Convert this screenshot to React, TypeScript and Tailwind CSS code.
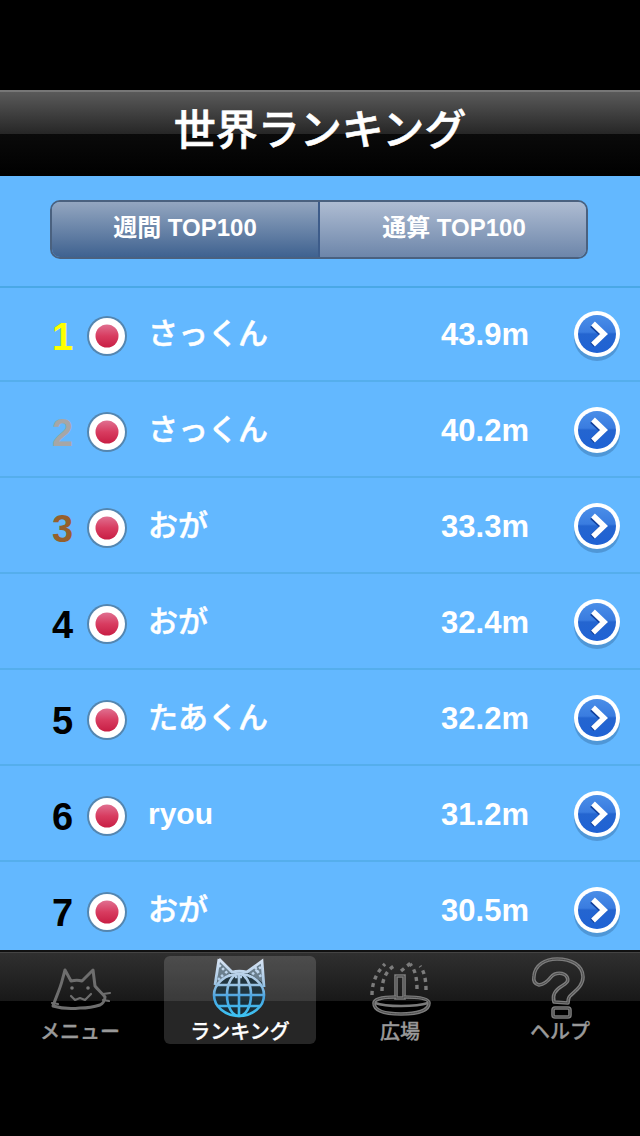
const jp = { fontFamily: '"Liberation Sans", "Noto Sans CJK JP", sans-serif' }

const rows = [
  { rank: "1", color: "text-[#ffff00]", name: "さっくん", dist: "43.9m", weight: "font-medium [-webkit-text-stroke:0.5px_white]" },
  { rank: "2", color: "text-[#a6a6a6]", name: "さっくん", dist: "40.2m", weight: "font-medium [-webkit-text-stroke:0.5px_white]" },
  { rank: "3", color: "text-[#96602c]", name: "おが", dist: "33.3m", weight: "font-medium [-webkit-text-stroke:0.5px_white]" },
  { rank: "4", color: "text-black", name: "おが", dist: "32.4m", weight: "font-medium [-webkit-text-stroke:0.5px_white]" },
  { rank: "5", color: "text-black", name: "たあくん", dist: "32.2m", weight: "font-medium [-webkit-text-stroke:0.5px_white]" },
  { rank: "6", color: "text-black", name: "ryou", dist: "31.2m", weight: "font-bold" },
  { rank: "7", color: "text-black", name: "おが", dist: "30.5m", weight: "font-medium [-webkit-text-stroke:0.5px_white]" },
]

function Flag() {
  return (
    <svg width="42" height="42" viewBox="0 0 42 42" className="shrink-0">
      <defs>
        <linearGradient id="red" x1="0" y1="0" x2="0" y2="1">
          <stop offset="0" stopColor="#e07090" />
          <stop offset="0.5" stopColor="#d83c60" />
          <stop offset="1" stopColor="#c81e44" />
        </linearGradient>
      </defs>
      <circle cx="21" cy="21" r="20" fill="#4f7596" opacity="0.75" />
      <circle cx="21" cy="21" r="18" fill="#fff" />
      <circle cx="21" cy="21" r="11.5" fill="url(#red)" />
    </svg>
  )
}

function Disclosure() {
  return (
    <svg width="50" height="54" viewBox="0 0 50 54" className="shrink-0">
      <defs>
        <linearGradient id="blue" x1="0" y1="0" x2="0" y2="1">
          <stop offset="0" stopColor="#4a8ee8" />
          <stop offset="0.45" stopColor="#3a7ce0" />
          <stop offset="0.5" stopColor="#2465d0" />
          <stop offset="1" stopColor="#1f62d4" />
        </linearGradient>
      </defs>
      <ellipse cx="25" cy="29" rx="23" ry="23" fill="#2a5a8c" opacity="0.35" />
      <circle cx="25" cy="25" r="23" fill="#fff" />
      <circle cx="25" cy="25" r="19" fill="url(#blue)" />
      <path d="M20 16 L31 26 L20 36" fill="none" stroke="#12409c" strokeWidth="5.5" />
      <path d="M21 14.5 L32 25 L21 35.5" fill="none" stroke="#fff" strokeWidth="5.5" />
    </svg>
  )
}

function Outline({ d }: { d: string }) {
  return (
    <>
      <path d={d} stroke="#7c7c7c" strokeWidth="3.6" />
      <path d={d} stroke="#4a4a4a" strokeWidth="1" />
    </>
  )
}

function CatIcon() {
  return (
    <svg width="70" height="70" viewBox="0 0 70 70" fill="none" strokeLinecap="round" strokeLinejoin="round">
      <g stroke="#6e6e6e" strokeWidth="3">
        <path d="M8 53 C11 44 15 36 17 28 L20 17 L26 28 C30 27 34 27 37 28 L48 17 L50 33 C53 37 57 40 60 44 C60 48 57 51 55 52 C46 55 38 55 35 55 C26 56 18 56 8 53 Z" />
        <path d="M58 41 L65 40 M58 47 L64 48 M7 50 L13 51" strokeWidth="2.2" />
        <path d="M26 43 L30 47 L35 45 L40 47 L46 41" strokeWidth="2.2" />
      </g>
      <circle cx="27" cy="35" r="1.8" fill="#777" />
      <circle cx="43" cy="35" r="1.8" fill="#777" />
    </svg>
  )
}

function GlobeCatIcon() {
  return (
    <svg width="70" height="70" viewBox="0 0 70 70" fill="none">
      <defs>
        <linearGradient id="globe" gradientUnits="userSpaceOnUse" x1="0" y1="6" x2="0" y2="64">
          <stop offset="0" stopColor="#d8e4f4" />
          <stop offset="0.4" stopColor="#a8c8e4" />
          <stop offset="0.65" stopColor="#4aa4e0" />
          <stop offset="1" stopColor="#3cc4f4" />
        </linearGradient>
      </defs>
      <path d="M14 6 L27 19 C32 18 37 18 42 19 L57 8 L59 40 C59 54 48 63 34 63 C20 63 9 54 9 40 Z" fill="#14303f" fillOpacity="0.7" />
      <path d="M14 6 L27 19 L12 30 Z M57 8 L42 19 L58 30 Z" fill="#c4d6ea" fillOpacity="0.45" />
      <g stroke="url(#globe)" strokeWidth="2.6">
        <path d="M14 6 L27 19 C32 18 37 18 42 19 L57 8 L59 34 M14 6 L10 32" strokeWidth="2.8" />
        <ellipse cx="34" cy="42" rx="25" ry="21" />
        <ellipse cx="34" cy="42" rx="12" ry="21" />
        <path d="M34 21 V63 M9 42 H59 M12 32 H56 M13 53 H55" />
        <path d="M14 12 L26 24 M18 22 L12 28 M56 14 L44 24 M50 14 L56 24 M30 24 L40 24" strokeDasharray="2.5 2" />
      </g>
    </svg>
  )
}

function FountainIcon() {
  return (
    <svg width="80" height="70" viewBox="0 0 80 70" fill="none">
      <Outline d="M36 23 H44 V45 H36 Z" />
      <Outline d="M36 44 C26 44 14 45 14 50 C14 58 26 61 41 61 C56 61 69 58 69 50 C69 45 56 44 44 44" />
      <path d="M15 50 C26 54 56 54 68 50" stroke="#7c7c7c" strokeWidth="2.4" />
      <g stroke="#7c7c7c" strokeWidth="3.4" strokeDasharray="4 4">
        <path d="M12 42 C12 30 16 20 25 11" />
        <path d="M22 38 C22 27 26 18 34 13" />
        <path d="M57 36 C57 25 55 16 50 11" />
        <path d="M66 37 C66 26 64 18 60 13" />
        <path d="M41 18 L52 9" />
      </g>
    </svg>
  )
}

function HelpIcon() {
  return (
    <svg width="70" height="70" viewBox="0 0 70 70" fill="none" strokeLinejoin="round">
      <Outline d="M9 23 C10 12 20 6 32 6 C46 6 58 12 58 24 C58 33 50 38 45 43 C43 45 43 47 43 50 L29 49 C27 42 30 37 37 33 C42 30 44 28 42 24 C39 19 30 19 26 24 C23 28 20 31 14 32 C10 31 8 28 9 23 Z" />
      <Outline d="M30 55 H43 Q45 55 45 57 V62 Q45 64 43 64 H30 Q28 64 28 62 V57 Q28 55 30 55 Z" />
    </svg>
  )
}

function Tab({ icon, label, active }: { icon: React.ReactNode; label: string; active?: boolean }) {
  return (
    <div className="w-[160px] flex justify-center">
      <div className={`w-[152px] h-[88px] pt-[2px] rounded-md flex flex-col items-center ${active ? "bg-white/15 text-white" : "text-[#999]"}`}>
        <div className="h-[60px] flex items-center justify-center">{icon}</div>
        <div className="mt-[2px] text-[20px] leading-[24px] font-medium [-webkit-text-stroke:0.3px_currentColor]">{label}</div>
      </div>
    </div>
  )
}

export default function App() {
  return (
    <div className="w-[640px] h-[1136px] bg-black flex flex-col overflow-hidden" style={jp}>
      <div className="h-[90px] shrink-0" />
      <header className="h-[86px] shrink-0 flex items-center justify-center border-t-2 border-[#777] bg-[linear-gradient(#5a5a5a_0%,#262626_50%,#0a0a0a_50%,#000_100%)]">
        <h1 className="text-[42px] leading-none font-medium text-white pb-[6px] [-webkit-text-stroke:0.6px_white]">世界ランキング</h1>
      </header>

      <main className="h-[774px] shrink-0 bg-[#63b8ff] overflow-hidden">
        <div className="pt-6 pl-[50px]">
          <div className="w-[538px] h-[59px] flex rounded-[10px] border-2 border-[#4a617f] overflow-hidden text-white text-[24px] font-bold">
            <div className="w-[268px] pb-[4px] flex items-center justify-center border-r-2 border-[#3d5c8a] bg-[linear-gradient(#93a6c0,#3f6290)]">週間 TOP100</div>
            <div className="flex-1 pb-[4px] pl-[2px] flex items-center justify-center bg-[linear-gradient(#aebcd2,#6d86aa)]">通算 TOP100</div>
          </div>
        </div>
        <div className="mt-[27px]">
          {rows.map((r) => (
            <div key={r.rank} className="h-[96px] flex items-center border-b-2 border-[#55aeec] pl-[50px] pr-[18px] first:shadow-[inset_0_2px_0_#4aa8e6]">
              <div className={`w-[24px] mt-[8px] pl-[1px] text-center text-[38px] font-bold leading-none ${r.color}`}>{r.rank}</div>
              <div className="ml-[12px] mt-[6px]"><Flag /></div>
              <div className={`ml-[20px] flex-1 text-[30px] text-white ${r.weight}`}>{r.name}</div>
              <div className="mt-[4px] text-[31px] font-bold text-white">{r.dist}</div>
              <div className="ml-[43px] mt-[6px]"><Disclosure /></div>
            </div>
          ))}
        </div>
      </main>

      <nav className="h-[100px] shrink-0 border-t-2 border-[#111] shadow-[inset_0_1px_0_#444] bg-[linear-gradient(#303030_0%,#181818_50%,#000_50%,#000_100%)] flex pt-[4px]">
        <Tab icon={<CatIcon />} label="メニュー" />
        <Tab icon={<GlobeCatIcon />} label="ランキング" active />
        <Tab icon={<FountainIcon />} label="広場" />
        <Tab icon={<HelpIcon />} label="ヘルプ" />
      </nav>
    </div>
  )
}
